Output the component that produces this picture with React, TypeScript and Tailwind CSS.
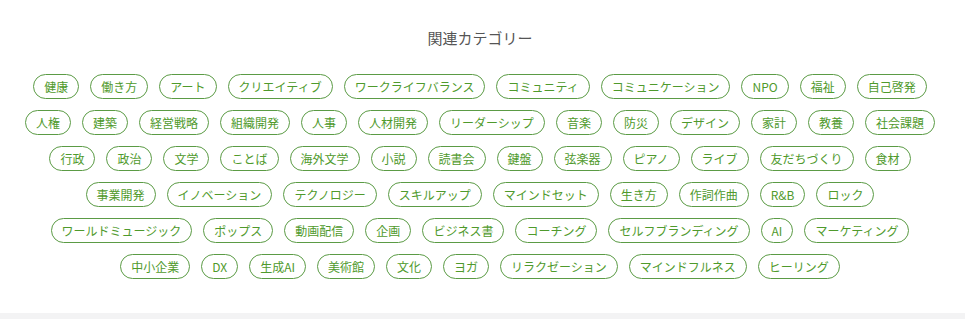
const categories = [
  '健康', '働き方', 'アート', 'クリエイティブ', 'ワークライフバランス', 'コミュニティ', 'コミュニケーション', 'NPO', '福祉', '自己啓発',
  '人権', '建築', '経営戦略', '組織開発', '人事', '人材開発', 'リーダーシップ', '音楽', '防災', 'デザイン', '家計', '教養', '社会課題',
  '行政', '政治', '文学', 'ことば', '海外文学', '小説', '読書会', '鍵盤', '弦楽器', 'ピアノ', 'ライブ', '友だちづくり', '食材',
  '事業開発', 'イノベーション', 'テクノロジー', 'スキルアップ', 'マインドセット', '生き方', '作詞作曲', 'R&B', 'ロック',
  'ワールドミュージック', 'ポップス', '動画配信', '企画', 'ビジネス書', 'コーチング', 'セルフブランディング', 'AI', 'マーケティング',
  '中小企業', 'DX', '生成AI', '美術館', '文化', 'ヨガ', 'リラクゼーション', 'マインドフルネス', 'ヒーリング'
]

export default function App() {
  return (
    <div className="w-full bg-white font-['Noto_Sans_CJK_JP','Noto_Sans',sans-serif]">
      <section className="pt-[28px] pb-[34px] pl-[12px] pr-[17px]">
        <h2 className="text-center text-[15px] leading-[20px] text-[#555]">関連カテゴリー</h2>

        <ul className="mt-[26px] flex flex-wrap justify-center gap-x-[11px] gap-y-[11px]">
          {categories.map(category => (
            <li key={category}>
              <a
                className="h-[25px] px-[10px] flex items-center rounded-full border border-[#5b9b45] text-[12px] text-[#4f9a2c] leading-none whitespace-nowrap"
                href="#"
              >
                {category}
              </a>
            </li>
          ))}
        </ul>
      </section>

      <div className="h-[6px] bg-[#f3f3f4]" />
    </div>
  )
}
